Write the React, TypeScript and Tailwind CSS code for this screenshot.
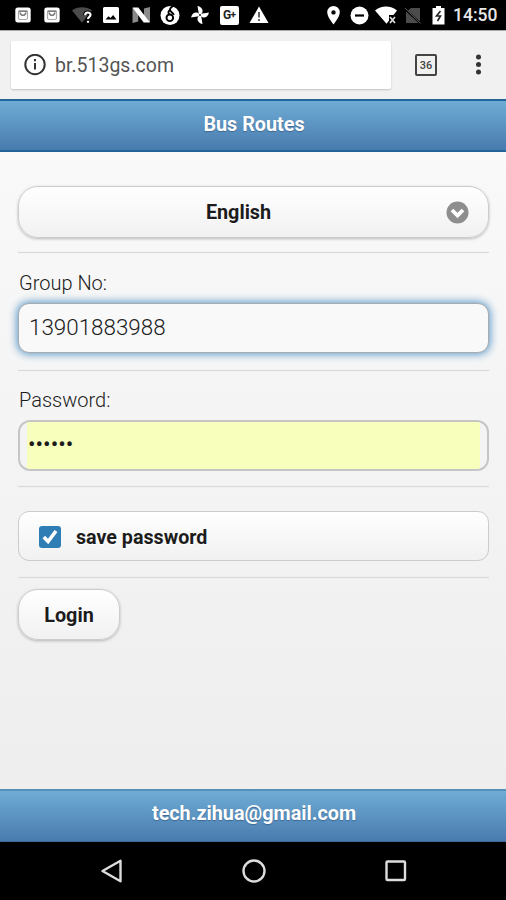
import { useState } from "react";
import type { ReactNode } from "react";

function StatusIcon({ children }: { children: ReactNode }) {
  return (
    <svg className="w-5 h-5 shrink-0" viewBox="0 0 20 20" fill="#fff">
      {children}
    </svg>
  );
}

function MailIcon() {
  return (
    <StatusIcon>
      <rect x="2.3" y="2.5" width="15.4" height="15" rx="2.5" />
      <rect x="5.5" y="6" width="9" height="8.500" rx="1.5" fill="none" stroke="#aaa" strokeWidth="1.2" />
      <path d="M5.500 6.200h9" stroke="#777" strokeWidth="1.400" />
      <path d="M7 7.500c1 3.800 5 3.800 6 0" fill="none" stroke="#777" strokeWidth="1.400" />
    </StatusIcon>
  );
}

function Divider() {
  return <div className="h-px bg-[#d9d9d9] shadow-[0_0_1px_#d9d9d9]" />;
}

export default function App() {
  const [group, setGroup] = useState("13901883988");
  const [password, setPassword] = useState("123456");
  const [save, setSave] = useState(true);

  return (
    <div className="w-[506px] h-[900px] flex flex-col overflow-hidden bg-black font-[Roboto,sans-serif] text-[#1c1c1c]">
      {/* Status bar */}
      <div className="h-[30px] shrink-0 flex items-center bg-black text-white">
        <div className="flex w-[320px] pl-2">
          <div className="w-[29.5px] flex justify-center"><MailIcon /></div>
          <div className="w-[29.5px] flex justify-center"><MailIcon /></div>
          <div className="w-[29.5px] flex justify-center">
            <StatusIcon>
              <path d="M0 5.500C5.500 1.300 14.500 1.300 20 5.500L10 17.800z" fill="#4b4b4b" />
              <path d="M13.200 10.200c0-3.600 5.300-3.400 5.300-.4 0 2-2.500 2-2.500 4.200M16 15.700v2" fill="none" stroke="#000" strokeWidth="4" />
              <path d="M13.200 10.200c0-3.600 5.300-3.400 5.300-.4 0 2-2.500 2-2.500 4.200M16 15.700v2" fill="none" stroke="#fff" strokeWidth="2.200" />
            </StatusIcon>
          </div>
          <div className="w-[29.5px] flex justify-center">
            <StatusIcon>
              <path fillRule="evenodd" d="M3.500 2h13A1.500 1.500 0 0118 3.500v13a1.500 1.500 0 01-1.500 1.500h-13A1.500 1.500 0 012 16.500v-13A1.500 1.500 0 013.500 2zM4.500 14.500h11l-3.400-4.500-2.600 3-2-1.700z" />
            </StatusIcon>
          </div>
          <div className="w-[29.5px] flex justify-center">
            <StatusIcon>
              <path d="M1.500 3h5.700v13.500L1.500 18zM13 3.500l6-1.500v15h-6z" fill="#8a8a8a" />
              <path d="M1.500 2.500h5.800L19 17.500h-6.300z" />
            </StatusIcon>
          </div>
          <div className="w-[29.5px] flex justify-center">
            <StatusIcon>
              <ellipse cx="10" cy="10.500" rx="9.500" ry="9.500" />
              <path d="M15.500 0c-4 1.200-6.500 3.500-5 6 .9 1.500 3 1.900 3.200 3.800M9.800 5c-2 1.500-1.500 3.500-.2 4.500" fill="none" stroke="#000" strokeWidth="1.900" />
              <circle cx="9.800" cy="12.800" r="3.300" fill="none" stroke="#000" strokeWidth="1.900" />
            </StatusIcon>
          </div>
          <div className="w-[29.5px] flex justify-center">
            <StatusIcon>
              {[0, 90, 180, 270].map((angle) => (
                <path key={angle} d="M9 10.500L7.500 1c3.500.8 5.500 3 5 6L11 9.500z" transform={`rotate(${angle} 10 10)`} />
              ))}
              <circle cx="10" cy="10" r="0.9" fill="#000" />
            </StatusIcon>
          </div>
          <div className="w-[29.5px] flex justify-center items-center">
            <div className="w-[19px] h-[19px] rounded-[2px] bg-white text-[#222] flex items-center justify-center text-[12px] leading-none font-bold tracking-[-0.5px]">
              G<span className="text-[10px]">+</span>
            </div>
          </div>
          <div className="w-[29.5px] flex justify-center">
            <StatusIcon>
              <path d="M10 1.500L19.500 18H.5z" />
              <path d="M10 7v5.500M10 14v2" stroke="#666" strokeWidth="2" />
            </StatusIcon>
          </div>
        </div>
        <div className="flex">
          <div className="w-[26.5px] flex justify-center">
            <StatusIcon>
              <path fillRule="evenodd" d="M10.500 1a6.300 6.300 0 00-6.300 6.300c0 4.700 6.300 12.200 6.300 12.200s6.300-7.500 6.300-12.200A6.300 6.300 0 0010.500 1zm0 4.200a2.200 2.200 0 110 4.400 2.200 2.200 0 010-4.400z" />
            </StatusIcon>
          </div>
          <div className="w-[26.5px] flex justify-center">
            <StatusIcon>
              <circle cx="9.500" cy="10.500" r="9" />
              <path d="M5 10.500h9" stroke="#000" strokeWidth="2.200" />
            </StatusIcon>
          </div>
          <div className="w-[26.5px] flex justify-center">
            <svg className="w-[22px] h-5" viewBox="0 0 22 20" fill="#fff">
              <path d="M0 5.500C6 .3 16 .3 22 5.500L18.500 10H14v5.500L11.500 18.800z" />
              <path d="M15 12l5 6M20 12l-5 6" stroke="#ddd" strokeWidth="1.700" />
            </svg>
          </div>
          <div className="w-[26.5px] flex justify-center">
            <StatusIcon>
              <path d="M8 3h9v15H3V7z" fill="#4c4c4c" />
              <path d="M1.500 3.500L18 19" stroke="#000" strokeWidth="2" />
              <path d="M2 3l15.500 15.500" stroke="#555" strokeWidth="1" />
            </StatusIcon>
          </div>
          <div className="w-[25px] flex justify-center">
            <StatusIcon>
              <path d="M7 1h5v2h3.500v16.500H3.500V3H7z" />
              <path d="M11.500 6L7.500 11h4L8.500 16" fill="none" stroke="#222" strokeWidth="1.600" />
            </StatusIcon>
          </div>
        </div>
        <span className="ml-[2px] pt-[2px] text-[17.5px] leading-none font-medium text-[#e8e8e8]">14:50</span>
      </div>

      {/* Browser toolbar */}
      <div className="h-[69px] shrink-0 flex items-center border-t border-[#aaa] bg-[#f1f1f1]">
        <div className="ml-[11px] w-[380px] h-[48px] flex items-center rounded-[2px] bg-white shadow-[0_1px_2px_rgba(0,0,0,0.2)]">
          <svg className="ml-[13px] w-[22px] h-[22px]" viewBox="0 0 22 22" fill="none" stroke="#333" strokeWidth="2">
            <circle cx="11" cy="10.500" r="9.700" />
            <path d="M11 9v6.500M11 5v2.200" />
          </svg>
          <span className="ml-[9px] pt-px text-[19.5px] leading-none text-[#555]">br.513gs.com</span>
        </div>
        <div className="ml-[24px] w-[22px] h-[22px] rounded-[2px] border-2 border-[#444] flex items-center justify-center text-[11px] leading-none font-medium text-[#444]">
          36
        </div>
        <svg className="ml-[38px] w-[6px] h-[22px]" viewBox="0 0 6 22" fill="#333">
          <circle cx="3.500" cy="3" r="2.500" />
          <circle cx="3.500" cy="10.500" r="2.500" />
          <circle cx="3.500" cy="18" r="2.500" />
        </svg>
      </div>

      {/* Page header */}
      <header className="h-[53px] shrink-0 flex items-center justify-center border-y-2 border-[#23649a] bg-linear-to-b from-[#6facd5] to-[#497bae] pb-[2px] text-white">
        <h1 className="pl-[2px] text-[19.8px] leading-none font-bold [text-shadow:0_1px_1px_#3e6790]">Bus Routes</h1>
      </header>

      {/* Login form */}
      <main className="h-[637px] shrink-0 flex flex-col pl-[18px] pr-[17px] pt-[34px] bg-linear-to-b from-[#f9f9f9] to-[#eeeeee]">
        <button className="h-[52px] shrink-0 flex items-center rounded-[20px] border border-[#ccc] bg-linear-to-b from-white to-[#f1f1f1] shadow-[0_1px_3px_rgba(0,0,0,0.25)]">
          <span className="flex-1 pl-[12px] pt-[2px] text-center text-[19.8px] font-bold [text-shadow:0_1px_0_#fff]">English</span>
          <svg className="mr-[19px] w-[23px] h-[23px]" viewBox="0 0 23 23">
            <circle cx="11.500" cy="11.500" r="11" fill="#8e8e8e" />
            <path d="M6 9l5.500 5.500L17 9" fill="none" stroke="#fff" strokeWidth="3.800" />
          </svg>
        </button>
        <div className="pt-[14px]"><Divider /></div>

        <label htmlFor="group" className="pl-px pt-[17px] text-[20px] leading-[26px] font-light">Group No:</label>
        <input
          id="group"
          value={group}
          onChange={(e) => setGroup(e.target.value)}
          className="mt-[7px] h-[50px] shrink-0 rounded-[11px] border border-[#a6acb2] bg-[#f9f9f9] px-[10px] pb-[2px] text-[22.4px] font-light outline-none shadow-[0_0_8px_1px_#5393c5]"
        />
        <div className="pt-[17px]"><Divider /></div>

        <label htmlFor="password" className="pl-px pt-[16px] text-[20px] leading-[26px] font-light">Password:</label>
        <div className="mt-[7px] h-[51px] shrink-0 overflow-hidden rounded-[12px] border-2 border-[#c6c6c6] bg-[#f4f4f4] px-[7px]">
          <input
            id="password"
            type="password"
            value={password}
            onChange={(e) => setPassword(e.target.value)}
            className="w-full h-full bg-[#f8ffbd] px-px pb-[4px] text-[22.4px] outline-none"
          />
        </div>
        <div className="pt-[15px]"><Divider /></div>

        <button
          onClick={() => setSave(!save)}
          className="mt-[24px] h-[50px] shrink-0 flex items-center rounded-[11px] border border-[#ccc] bg-linear-to-b from-white to-[#f1f1f1] pl-[20px]"
        >
          <span className="mt-[2px] w-[22px] h-[22px] rounded-[3px] bg-[#2f7db5]">
            {save && (
              <svg className="w-[22px] h-[22px]" viewBox="0 0 22 22" fill="none" stroke="#fff" strokeWidth="3.600">
                <path d="M4.800 11l4.300 4.500L17 5" />
              </svg>
            )}
          </span>
          <span className="ml-[15px] pt-[4px] text-[19.7px] font-bold [text-shadow:0_1px_0_#fff]">save password</span>
        </button>
        <div className="pt-[16px]"><Divider /></div>

        <button className="mt-[11px] w-[102px] h-[51px] shrink-0 rounded-[20px] border border-[#ccc] bg-linear-to-b from-white to-[#f1f1f1] pt-[2px] text-[19.8px] font-bold shadow-[0_1px_3px_rgba(0,0,0,0.25)] [text-shadow:0_1px_0_#fff]">
          Login
        </button>
      </main>

      {/* Page footer */}
      <footer className="h-[53px] shrink-0 flex items-center justify-center border-t-2 border-b border-t-[#5690b8] border-b-[#3c6c9c] bg-linear-to-b from-[#6facd5] to-[#497bae] pb-[4px] text-white">
        <span className="pl-[2px] text-[19.8px] leading-none font-bold [text-shadow:0_1px_1px_#3e6790]">tech.zihua@gmail.com</span>
      </footer>

      {/* Android navigation */}
      <nav className="h-[58px] shrink-0 flex items-center justify-center gap-[118px] bg-black pl-[2px]">
        <svg className="w-6 h-6" viewBox="0 0 24 24" fill="none" stroke="#ddd" strokeWidth="2.400">
          <path d="M2.500 12L20.500 1.800v20.400z" strokeLinejoin="round" />
        </svg>
        <svg className="w-6 h-6" viewBox="0 0 24 24" fill="none" stroke="#ddd" strokeWidth="2.400">
          <circle cx="12" cy="12" r="10.500" />
        </svg>
        <svg className="w-6 h-6" viewBox="0 0 24 24" fill="none" stroke="#ddd" strokeWidth="2.400">
          <rect x="2.500" y="2.500" width="18.500" height="18.500" rx="1" />
        </svg>
      </nav>
    </div>
  );
}
